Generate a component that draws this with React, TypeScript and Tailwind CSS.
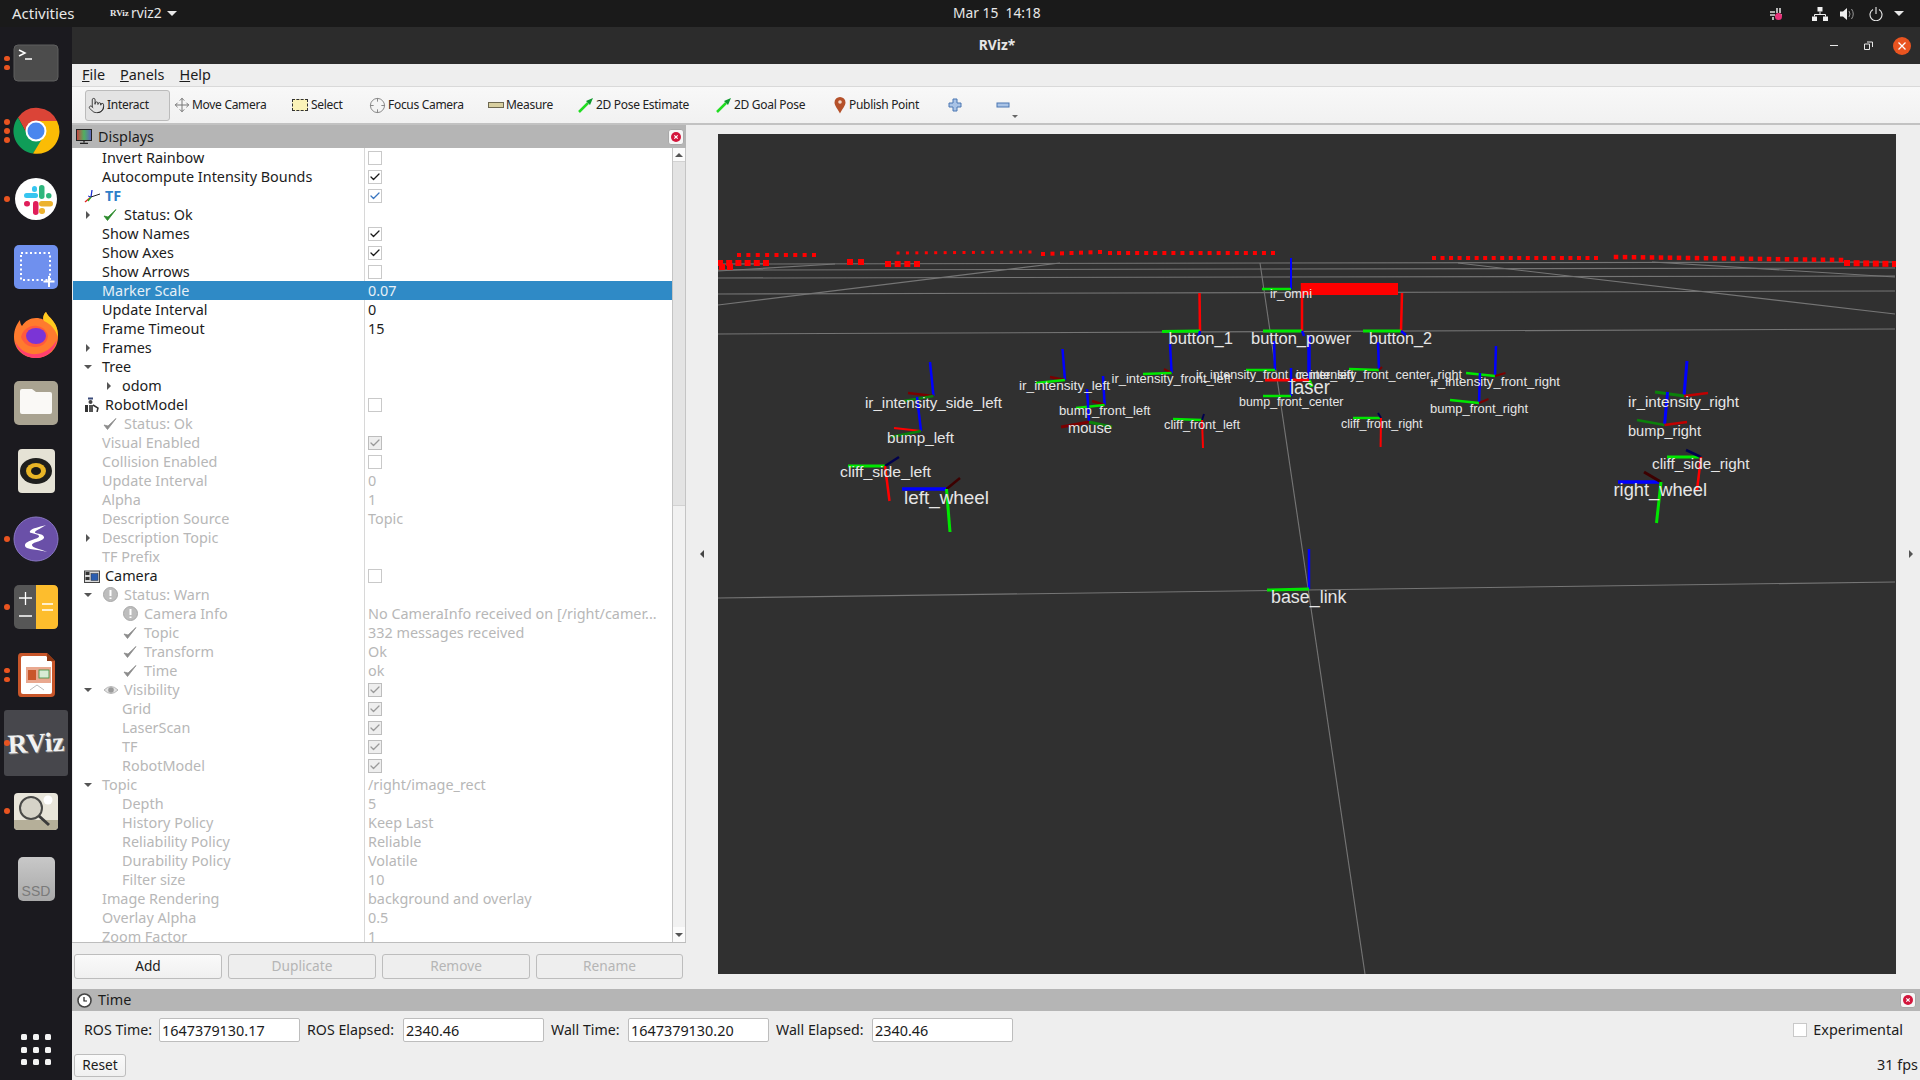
import { Check, Crosshair, Move, Pointer } from "lucide-react";
import type { ReactNode } from "react";

type IconName = "ok" | "warn" | "eye" | "tf" | "robot" | "camera";

type Row = {
  label: string;
  level?: 0 | 1;
  arrow?: "right" | "down";
  icon?: IconName;
  top?: boolean;
  value?: string;
  check?: boolean;
  dis?: boolean;
  sel?: boolean;
  blue?: boolean;
};

const ROWS: Row[] = [
  { label: "Invert Rainbow", check: false },
  { label: "Autocompute Intensity Bounds", check: true },
  { label: "TF", top: true, icon: "tf", check: true, blue: true },
  { label: "Status: Ok", arrow: "right", icon: "ok" },
  { label: "Show Names", check: true },
  { label: "Show Axes", check: true },
  { label: "Show Arrows", check: false },
  { label: "Marker Scale", value: "0.07", sel: true },
  { label: "Update Interval", value: "0" },
  { label: "Frame Timeout", value: "15" },
  { label: "Frames", arrow: "right" },
  { label: "Tree", arrow: "down" },
  { label: "odom", level: 1, arrow: "right" },
  { label: "RobotModel", top: true, icon: "robot", check: false },
  { label: "Status: Ok", icon: "ok", dis: true },
  { label: "Visual Enabled", check: true, dis: true },
  { label: "Collision Enabled", check: false, dis: true },
  { label: "Update Interval", value: "0", dis: true },
  { label: "Alpha", value: "1", dis: true },
  { label: "Description Source", value: "Topic", dis: true },
  { label: "Description Topic", arrow: "right", dis: true },
  { label: "TF Prefix", dis: true },
  { label: "Camera", top: true, icon: "camera", check: false },
  { label: "Status: Warn", arrow: "down", icon: "warn", dis: true },
  { label: "Camera Info", level: 1, icon: "warn", value: "No CameraInfo received on [/right/camer...", dis: true },
  { label: "Topic", level: 1, icon: "ok", value: "332 messages received", dis: true },
  { label: "Transform", level: 1, icon: "ok", value: "Ok", dis: true },
  { label: "Time", level: 1, icon: "ok", value: "ok", dis: true },
  { label: "Visibility", arrow: "down", icon: "eye", check: true, dis: true },
  { label: "Grid", level: 1, check: true, dis: true },
  { label: "LaserScan", level: 1, check: true, dis: true },
  { label: "TF", level: 1, check: true, dis: true },
  { label: "RobotModel", level: 1, check: true, dis: true },
  { label: "Topic", arrow: "down", value: "/right/image_rect", dis: true },
  { label: "Depth", level: 1, value: "5", dis: true },
  { label: "History Policy", level: 1, value: "Keep Last", dis: true },
  { label: "Reliability Policy", level: 1, value: "Reliable", dis: true },
  { label: "Durability Policy", level: 1, value: "Volatile", dis: true },
  { label: "Filter size", level: 1, value: "10", dis: true },
  { label: "Image Rendering", value: "background and overlay", dis: true },
  { label: "Overlay Alpha", value: "0.5", dis: true },
  { label: "Zoom Factor", value: "1", dis: true },
];

const R = "#ff0000";
const G = "#00e600";
const B = "#0000ff";
const DR = "#7a0000";
const DG = "#0b800b";
const NV = "#00004d";

// origin, then axis ends as [x, y, colour, width]
const FRAMES: { o: [number, number]; axes: [number, number, string, number][] }[] = [
  { o: [1291, 289], axes: [[1291, 258, B, 2], [1262, 289, G, 2.5]] },
  { o: [1200, 331], axes: [[1199.5, 293, R, 2.5], [1162, 331.5, G, 3], [1199, 336, B, 2.5]] },
  { o: [1302, 331], axes: [[1302, 283, R, 2.5], [1263, 331, G, 3], [1304, 336, B, 2.5]] },
  { o: [1401, 331], axes: [[1402, 293, R, 2.5], [1363, 331, G, 3], [1406, 335, B, 2.5]] },
  { o: [933.5, 396], axes: [[930, 362, B, 2.5], [908, 393, DR, 2.5], [904, 401, DG, 2.5]] },
  { o: [921, 431], axes: [[917, 397, B, 2.5], [894, 428, R, 2], [891, 437, DG, 2.5]] },
  { o: [885, 466], axes: [[848, 466, G, 3], [899, 457, NV, 2.5], [889.5, 501, R, 2.5]] },
  { o: [946.5, 489], axes: [[902, 489, B, 3.5], [960, 478, "#3d0000", 2.5], [950, 532, G, 3]] },
  { o: [1065, 380], axes: [[1062.5, 349, B, 2.5], [1050, 377, DR, 2.5], [1036, 383, G, 2.5]] },
  { o: [1104.6, 405], axes: [[1103, 376, B, 2.5], [1092, 401, DR, 2.5], [1076, 408, G, 2.5]] },
  { o: [1089, 422], axes: [[1087, 389, B, 2.5], [1061, 427, DR, 3], [1112, 427, DG, 3]] },
  { o: [1202, 420], axes: [[1173, 419, G, 2.5], [1204, 414, NV, 2], [1203, 448, R, 2]] },
  { o: [1171.6, 373], axes: [[1170, 344, B, 2.5], [1164, 369, DR, 2], [1143, 374, G, 2.5]] },
  { o: [1275, 370], axes: [[1274, 341, B, 2.5], [1246, 370, G, 2.5]] },
  { o: [1379, 370], axes: [[1378, 342, B, 2.5], [1349, 369, G, 2.5], [1382, 367, DR, 2]] },
  { o: [1495, 376], axes: [[1496, 346, B, 2.5], [1466, 373, G, 2.5], [1505.5, 373, DR, 2]] },
  { o: [1479, 403], axes: [[1480, 373, B, 2.5], [1450, 400, G, 2.5], [1488.5, 399, DR, 2]] },
  { o: [1309, 380], axes: [[1309, 335, B, 3.5], [1312, 387, G, 3.5], [1265, 380, R, 3]] },
  { o: [1291, 396], axes: [[1291, 368, B, 2.5], [1263, 396, G, 2.5]] },
  { o: [1381, 418], axes: [[1353, 418, G, 2.5], [1378, 413, NV, 2], [1380.6, 447, R, 2]] },
  { o: [1684, 396], axes: [[1687, 361, B, 3], [1655, 392, DG, 3], [1708, 393, "#c00000", 2.5]] },
  { o: [1664.5, 425], axes: [[1667.6, 392, B, 3], [1637, 420, DG, 2.5], [1687, 422, "#c00000", 2.5]] },
  { o: [1701, 457], axes: [[1667, 457, G, 3], [1686, 450, NV, 2.5], [1697, 490, R, 2.5]] },
  { o: [1661, 482], axes: [[1618, 482, B, 3.5], [1644, 472, "#3d0000", 3], [1656.5, 523, G, 3]] },
  { o: [1309, 589], axes: [[1309, 549, B, 2.5], [1267, 590, G, 3]] },
];

// name, left, right, baseline, font size
const LABELS: [string, number, number, number, number][] = [
  ["ir_omni", 1270, 1312, 298, 12],
  ["button_1", 1168.5, 1233, 344, 17],
  ["button_power", 1251, 1351, 344, 17],
  ["button_2", 1369, 1432, 344, 17],
  ["ir_intensity_side_left", 865, 1002, 408, 15],
  ["bump_left", 887, 954, 443, 15],
  ["cliff_side_left", 840, 931, 477, 15],
  ["left_wheel", 904, 989, 504, 19],
  ["ir_intensity_left", 1019, 1110, 390, 13.5],
  ["bump_front_left", 1059, 1150.5, 415, 13.5],
  ["mouse", 1068, 1112, 433, 14],
  ["cliff_front_left", 1164, 1240, 429, 12.5],
  ["ir_intensity_front_left", 1111.5, 1231, 383, 12.5],
  ["ir_intensity_front_center_left", 1196, 1354, 379, 12.5],
  ["ir_intensity_front_center_right", 1296, 1462, 379, 12.5],
  ["ir_intensity_front_right", 1430.5, 1560, 386, 13.5],
  ["bump_front_right", 1430, 1528, 413, 13.5],
  ["laser", 1290, 1330, 394, 20],
  ["bump_front_center", 1239, 1343.5, 406, 12.5],
  ["cliff_front_right", 1341, 1422.5, 428, 12.5],
  ["ir_intensity_right", 1628, 1739, 407, 15],
  ["bump_right", 1628, 1701, 436, 15],
  ["cliff_side_right", 1652, 1749.5, 469, 15],
  ["right_wheel", 1613.5, 1707, 496, 19],
  ["base_link", 1271, 1346.5, 603, 18],
];

const GRID_LINES: [number, number, number, number][] = [
  [718, 264, 1895, 262],
  [718, 270, 1895, 268],
  [718, 278, 1895, 276],
  [718, 294, 1895, 291],
  [718, 334, 1895, 329],
  [718, 305, 1060, 263],
  [718, 271, 835, 264],
  [1458, 263, 1895, 314],
  [1652, 262, 1895, 277],
  [1260, 263, 1365, 974],
  [718, 598, 1895, 582],
];

// x start, x end, y start, y end, count, size
const SCAN: [number, number, number, number, number, number][] = [
  [739, 814, 255, 255, 9, 4],
  [720, 766, 263, 263, 6, 6],
  [722, 730, 267, 267, 2, 6],
  [850, 861, 262, 262, 2, 6],
  [888, 917, 264, 264, 4, 6],
  [898, 1030, 253, 252, 15, 3],
  [1043, 1100, 254, 252, 7, 4],
  [1110, 1273, 253, 253, 19, 4],
  [1434, 1596, 258, 258, 20, 4],
  [1616, 1841, 257, 260, 26, 4.5],
  [1847, 1895, 263, 264, 6, 6],
];

function scanPoints() {
  const pts: { x: number; y: number; s: number }[] = [];
  SCAN.forEach(([x1, x2, y1, y2, n, s]) => {
    for (let i = 0; i < n; i++) {
      const t = n > 1 ? i / (n - 1) : 0;
      pts.push({ x: x1 + (x2 - x1) * t, y: y1 + (y2 - y1) * t, s });
    }
  });
  return pts;
}

function Viewport() {
  return (
    <svg viewBox="718 134 1178 840" className="block h-[840px] w-[1178px] bg-[#303030]">
      {GRID_LINES.map(([x1, y1, x2, y2], i) => (
        <line key={i} x1={x1} y1={y1} x2={x2} y2={y2} stroke="#757575" strokeWidth="1.1" />
      ))}
      {scanPoints().map((p, i) => (
        <rect key={i} x={p.x - p.s / 2} y={p.y - p.s / 2} width={p.s} height={p.s} fill="#ff0000" />
      ))}
      <rect x="1302" y="283" width="96" height="12" fill="#ff0000" />
      {FRAMES.map((f, i) => (
        <g key={i}>
          {f.axes.map(([x, y, c, w], j) => (
            <line key={j} x1={f.o[0]} y1={f.o[1]} x2={x} y2={y} stroke={c} strokeWidth={w} />
          ))}
        </g>
      ))}
      {LABELS.map(([name, x1, x2, y, size]) => (
        <text
          key={name}
          x={x1}
          y={y}
          fontSize={size}
          fill="#e6e6e6"
          fontFamily="'Liberation Sans', sans-serif"
          textLength={x2 - x1}
          lengthAdjust="spacingAndGlyphs"
        >
          {name}
        </text>
      ))}
    </svg>
  );
}

/* dock */

function DockSlot({ dots = 0, children, active }: { dots?: number; children: ReactNode; active?: boolean }) {
  return (
    <div className="relative flex h-[68px] items-center justify-center">
      {active && <div className="absolute inset-x-[4px] inset-y-[1px] rounded-[3px] bg-[#47474c]" />}
      <div className="absolute left-[4px] flex flex-col gap-[3.5px]">
        {Array.from({ length: dots }).map((_, i) => (
          <div key={i} className="h-[5.5px] w-[5.5px] rounded-full bg-[#e95420]" />
        ))}
      </div>
      <div className="relative">{children}</div>
    </div>
  );
}

function DockIcon({ children }: { children: ReactNode }) {
  return (
    <svg width="48" height="48" viewBox="0 0 48 48" className="block">
      {children}
    </svg>
  );
}

function Dock() {
  return (
    <div className="flex w-[72px] shrink-0 flex-col bg-[#1b1a1f] pt-[2px]">
      <DockSlot dots={2}>
        <DockIcon>
          <rect x="2" y="6" width="44" height="36" rx="4" fill="#4c4c4c" stroke="#5e5e5e" />
          <path d="M7 11l6 3-6 3" fill="none" stroke="#fff" strokeWidth="1.5" />
          <path d="M13 20h7" stroke="#fff" strokeWidth="1.5" />
        </DockIcon>
      </DockSlot>
      <DockSlot dots={3}>
        <DockIcon>
          <path d="M24 14H45A22.5 22.5 0 0 0 6 10.5L15 27Z" fill="#db4437" />
          <path d="M6 10.5A22.5 22.5 0 0 0 21 46.4L33 29 15 27Z" fill="#0f9d58" />
          <path d="M45 14A22.5 22.5 0 0 1 21 46.4L33 27 24 14Z" fill="#fbbc05" />
          <circle cx="24" cy="24" r="10.5" fill="#fff" />
          <circle cx="24" cy="24" r="8.5" fill="#4a86ee" />
        </DockIcon>
      </DockSlot>
      <DockSlot dots={1}>
        <DockIcon>
          <circle cx="24" cy="24" r="21" fill="#fff" />
          <rect x="12" y="18" width="14" height="5" rx="2.5" fill="#36c5f0" />
          <rect x="20" y="11" width="5" height="6" rx="2.5" fill="#36c5f0" />
          <rect x="27" y="10" width="5.5" height="14" rx="2.75" fill="#2eb67d" />
          <rect x="34" y="18" width="5.5" height="5.5" rx="2.75" fill="#2eb67d" />
          <rect x="21" y="26" width="5.5" height="14" rx="2.75" fill="#e01e5a" />
          <rect x="12" y="26" width="6" height="5.5" rx="2.75" fill="#e01e5a" />
          <rect x="27" y="26" width="14" height="5.5" rx="2.75" fill="#ecb22e" />
          <rect x="27" y="33" width="6" height="6" rx="2.75" fill="#ecb22e" />
        </DockIcon>
      </DockSlot>
      <DockSlot>
        <DockIcon>
          <rect x="2" y="2" width="44" height="44" rx="5" fill="#6f90ee" />
          <rect x="9" y="10" width="29" height="27" fill="none" stroke="#fff" strokeWidth="2" strokeDasharray="2 2.5" />
          <path d="M37 33v11M31.5 38.5h11" stroke="#fff" strokeWidth="2" />
        </DockIcon>
      </DockSlot>
      <DockSlot>
        <DockIcon>
          <path d="M24 47C11 47 2 38 2 26 2 18 5 13 8 9c0 3 1 5 2 6 3-5 8-8 14-8 3 0 5 .5 7 1.5 0-3 1-6 3-7.500 1 3 4 5 7 9 4 5 5 10 5 16C46 37 37 47 24 47Z" fill="#ff7b2e" />
          <path d="M34 1c1 3 4 5 7 9 4 5 5 10 5 16-3-8-7-13-14-16-1.500-3-.5-7 2-9Z" fill="#ffcb1f" />
          <path d="M3 30c4 9 13 14 22 13 8-1 15-6 20-14-2 10-10 18-21 18C13 47 5 40 3 30Z" fill="#ff3f6e" />
          <path d="M9 26c2-8 9-12 16-11 6 1 10 5 11 10-1 7-6 11-13 11-7 0-12-4-14-10Z" fill="#ff5a3c" />
          <ellipse cx="24" cy="25" rx="10" ry="8" fill="#7b34d6" />
        </DockIcon>
      </DockSlot>
      <DockSlot>
        <DockIcon>
          <rect x="2" y="2" width="44" height="44" rx="5" fill="#a9a391" />
          <path d="M8 12q0-2 2-2h10l4 3h14q2 0 2 2v18q0 2-2 2H10q-2 0-2-2Z" fill="#faf9f6" />
        </DockIcon>
      </DockSlot>
      <DockSlot>
        <DockIcon>
          <rect x="6" y="2" width="37" height="44" rx="4" fill="#e5e2d5" />
          <ellipse cx="24" cy="24" rx="16" ry="13" fill="#1f1f1d" />
          <ellipse cx="24" cy="24" rx="10" ry="8" fill="#e9b526" />
          <ellipse cx="24" cy="24" rx="5" ry="4" fill="#1a1a18" />
        </DockIcon>
      </DockSlot>
      <DockSlot dots={1}>
        <DockIcon>
          <circle cx="24" cy="24" r="22" fill="#6a50a8" stroke="#8a78c4" />
          <path d="M34 10c-6 2-14 3-16 6s8 2 9 5-13 4-14 9 12 4 22 7c-6-3-15-4-15-7s13-4 12-8-10-3-9-5 7-4 11-7Z" fill="#fff" />
        </DockIcon>
      </DockSlot>
      <DockSlot dots={1}>
        <DockIcon>
          <rect x="2" y="2" width="44" height="44" rx="5" fill="#565656" />
          <path d="M24 2h17q5 0 5 5v34q0 5-5 5H24Z" fill="#fdbd2d" />
          <path d="M7 15h13M13.5 9v13M7 33h13M30 21h11M30 27h11" stroke="#fff" strokeWidth="1.3" />
        </DockIcon>
      </DockSlot>
      <DockSlot dots={2}>
        <DockIcon>
          <path d="M9 2h26l8 8v32q0 4-4 4H9q-3 0-3-4V6q0-4 3-4Z" fill="#c8562a" />
          <path d="M11 5h23l6 6v30q0 2-2 2H11q-2 0-2-2V7q0-2 2-2Z" fill="#fff" />
          <path d="M35 2l8 8h-8Z" fill="#8e3712" />
          <rect x="14" y="16" width="25" height="16" fill="#e9a88f" />
          <rect x="16" y="19" width="8" height="10" fill="#c8562a" />
          <rect x="27" y="19" width="10" height="8" fill="#d8ecd5" stroke="#3a8f3c" strokeWidth="0.8" />
          <path d="M18 39l7-5 7 5" fill="none" stroke="#bbb" />
        </DockIcon>
      </DockSlot>
      <DockSlot dots={1} active>
        <div className="flex h-[48px] w-[48px] -rotate-3 items-center justify-center font-['Liberation_Serif',serif] font-bold text-[#f2f2f2] [text-shadow:1px_1px_0_#8a8a8a]">
          <span className="text-[27px] leading-none">RViz</span>
        </div>
      </DockSlot>
      <DockSlot dots={1}>
        <DockIcon>
          <rect x="2" y="6" width="44" height="37" rx="4" fill="#e8e5da" />
          <path d="M2 33h44v6q0 4-4 4H6q-4 0-4-4Z" fill="#b5af99" />
          <circle cx="19" cy="21" r="11" fill="#d6d3c8" stroke="#4a4a48" strokeWidth="2" />
          <circle cx="36" cy="13" r="4.5" fill="#fff" />
          <path d="M27 29l10 9" stroke="#3b3b3b" strokeWidth="3" />
        </DockIcon>
      </DockSlot>
      <DockSlot>
        <div className="flex h-[44px] w-[37px] items-end justify-center rounded-[5px] bg-[linear-gradient(#c8c8c8,#a9a9a9)] pb-[3px] font-['Liberation_Sans',sans-serif] text-[14px] leading-none text-[#7a7a7a]">
          SSD
        </div>
      </DockSlot>
      <div className="mb-[15px] mt-auto grid w-[30px] grid-cols-3 gap-x-[6px] gap-y-[6.5px] self-center">
        {Array.from({ length: 9 }).map((_, i) => (
          <div key={i} className="h-[6px] w-[6px] rounded-[1.5px] bg-[#f4f4f4]" />
        ))}
      </div>
    </div>
  );
}

/* small icons */

function CloseBtn() {
  return (
    <div className="flex h-[16px] w-[16px] items-center justify-center rounded-[3px] border border-[#a9a9a9] bg-[#f6f6f6]">
      <svg width="12" height="12" viewBox="0 0 12 12">
        <circle cx="6" cy="6" r="5" fill="#d3163c" />
        <path d="M4.3 4.3l3.4 3.4M7.7 4.3l-3.4 3.4" stroke="#fff" strokeWidth="1.2" />
      </svg>
    </div>
  );
}

function Arrow({ dir }: { dir: "right" | "down" | "left" | "up" }) {
  if (dir === "right") return <div className="h-0 w-0 border-y-[4px] border-l-[4px] border-y-transparent border-l-[#555]" />;
  if (dir === "left") return <div className="h-0 w-0 border-y-[4px] border-r-[4px] border-y-transparent border-r-[#444]" />;
  if (dir === "up") return <div className="h-0 w-0 border-x-[4px] border-b-[4px] border-x-transparent border-b-[#555]" />;
  return <div className="h-0 w-0 border-x-[4px] border-t-[4px] border-x-transparent border-t-[#555]" />;
}

function RowIcon({ name, dis }: { name: IconName; dis?: boolean }) {
  if (name === "ok")
    return (
      <svg width="14" height="14" viewBox="0 0 14 14">
        <path d="M1 8l3.5 4.5L13 1.5 5 9Z" fill={dis ? "#8c8c8c" : "#2b8a2b"} stroke={dis ? "#8c8c8c" : "#2b8a2b"} strokeWidth="0.8" />
      </svg>
    );
  if (name === "warn")
    return (
      <svg width="15" height="15" viewBox="0 0 15 15">
        <circle cx="7.5" cy="7.5" r="7" fill="#bdbdbd" stroke="#a8a8a8" />
        <path d="M7.5 3v6M7.5 10.5v1.5" stroke="#fff" strokeWidth="2" />
      </svg>
    );
  if (name === "eye")
    return (
      <svg width="16" height="12" viewBox="0 0 16 12">
        <path d="M1 6q7-7 14 0-7 7-14 0Z" fill="#e2e2e2" stroke="#b5b5b5" />
        <circle cx="8" cy="6" r="2.8" fill="#9a9a9a" />
      </svg>
    );
  if (name === "tf")
    return (
      <svg width="17" height="15" viewBox="0 0 17 15">
        <path d="M7 9L8 2" stroke="#2030d0" strokeWidth="1.3" />
        <path d="M7 9L16 6" stroke="#222" strokeWidth="1" />
        <path d="M7 9L1 14" stroke="#e02020" strokeWidth="1.3" />
        <path d="M7 9L4 13" stroke="#20b020" strokeWidth="1.3" />
        <path d="M7 9L4 8" stroke="#2030d0" strokeWidth="1" />
      </svg>
    );
  if (name === "robot")
    return (
      <svg width="16" height="15" viewBox="0 0 16 15">
        <rect x="4" y="0.5" width="5" height="2" fill="#3a4a7a" />
        <circle cx="6.5" cy="5" r="2" fill="#444" />
        <rect x="1" y="8" width="3" height="7" fill="#333" />
        <rect x="5" y="8" width="4" height="7" fill="#555" />
        <path d="M9 8l5 3-1 4" fill="none" stroke="#333" strokeWidth="1.5" />
      </svg>
    );
  return (
    <svg width="16" height="14" viewBox="0 0 16 14">
      <rect x="0.5" y="2" width="15" height="11.5" fill="#d8d8d8" stroke="#444" />
      <rect x="1.5" y="3" width="4" height="3" fill="#333" />
      <rect x="1.5" y="8" width="4" height="3" fill="#333" />
      <rect x="7" y="4.5" width="7" height="7" fill="#2a5db0" stroke="#333" strokeWidth="0.5" />
    </svg>
  );
}

function Checkbox({ on, blue, dis }: { on?: boolean; blue?: boolean; dis?: boolean }) {
  return (
    <div className={`flex h-[14px] w-[14px] items-center justify-center border ${dis && on ? "border-[#bdbdbd] bg-[#eeeeee]" : "border-[#c9c9c9] bg-white"}`}>
      {on && <Check size={12} strokeWidth={2.6} className={dis ? "text-[#9a9a9a]" : blue ? "text-[#3a76c0]" : "text-[#1a1a1a]"} />}
    </div>
  );
}

function TreeRow({ row }: { row: Row }) {
  const tone = row.sel ? "bg-[#2f8ac6] text-[#e6f0f7]" : row.dis ? "text-[#b7b7b7]" : "text-[#1c1c1c]";
  return (
    <div className={`flex h-[19px] shrink-0 ${tone}`}>
      <div className={`flex w-[292px] shrink-0 items-center border-r ${row.sel ? "border-[#2f8ac6]" : "border-[#d8d8d8]"}`}>
        {row.top ? (
          <div className="flex w-[32px] shrink-0 justify-center pl-[6px]">{row.icon && <RowIcon name={row.icon} />}</div>
        ) : (
          <>
            <div className="flex w-[29px] shrink-0 justify-center">{row.level !== 1 && row.arrow && <Arrow dir={row.arrow} />}</div>
            {row.level === 1 && (
              <div className="flex w-[20px] shrink-0 justify-center pr-[6px]">{row.arrow && <Arrow dir={row.arrow} />}</div>
            )}
            {row.icon && <div className="flex w-[22px] shrink-0 pl-[1px]"><RowIcon name={row.icon} dis={row.dis} /></div>}
          </>
        )}
        <span className={`whitespace-nowrap ${row.blue ? "font-bold text-[#2f7fc9]" : ""}`}>{row.label}</span>
      </div>
      <div className="flex min-w-0 flex-1 items-center pl-[3px]">
        {row.check !== undefined ? (
          <Checkbox on={row.check} blue={row.blue} dis={row.dis} />
        ) : (
          <span className="whitespace-nowrap">{row.value}</span>
        )}
      </div>
    </div>
  );
}

function ToolItem({ icon, label, className, active }: { icon: ReactNode; label: string; className: string; active?: boolean }) {
  return (
    <div className={`flex h-[31px] shrink-0 items-center gap-[2px] ${active ? "rounded-[3px] border border-[#bbbbbb] bg-[#e3e3e3] pl-[2px]" : ""} ${className}`}>
      {icon}
      <span className="whitespace-nowrap">{label}</span>
    </div>
  );
}

function PoseArrow() {
  return (
    <svg width="16" height="16" viewBox="0 0 16 16">
      <path d="M1 15L10 6" stroke="#22dd22" strokeWidth="2.5" />
      <path d="M15 1l-7 3 4 4Z" fill="#0e9a2c" />
    </svg>
  );
}

function Toolbar() {
  return (
    <div className="flex h-[38px] shrink-0 items-center border-b-2 border-[#c2c2c2] bg-[linear-gradient(#f8f8f8,#f1f1f1)] pl-[13px] text-[12px] tracking-[-0.3px] text-[#222222]">
      <ToolItem active className="w-[85px]" label="Interact" icon={<Pointer size={17} strokeWidth={1.2} className="text-[#222]" />} />
      <ToolItem className="ml-[4px] w-[118px]" label="Move Camera" icon={<Move size={16} strokeWidth={1.5} className="text-[#777]" />} />
      <ToolItem
        className="w-[77px] gap-[3px]"
        label="Select"
        icon={<div className="h-[12px] w-[16px] border border-dashed border-[#333] bg-[#fbf3b8]" />}
      />
      <ToolItem className="w-[119px]" label="Focus Camera" icon={<Crosshair size={17} strokeWidth={1.4} className="text-[#888]" />} />
      <ToolItem
        className="w-[90px]"
        label="Measure"
        icon={<div className="h-[6px] w-[16px] border border-[#6d6850] bg-[#d8cfa0]" />}
      />
      <ToolItem className="w-[138px]" label="2D Pose Estimate" icon={<PoseArrow />} />
      <ToolItem className="w-[118px]" label="2D Goal Pose" icon={<PoseArrow />} />
      <ToolItem
        className="w-[114px]"
        label="Publish Point"
        icon={
          <svg width="12" height="17" viewBox="0 0 12 17" className="mr-[1px]">
            <path d="M6 16.5C4 12 .5 9 .5 5.5a5.5 5.5 0 0 1 11 0C11.5 9 8 12 6 16.5Z" fill="#b5512a" />
            <circle cx="6" cy="5" r="1.8" fill="#f3d8c8" />
          </svg>
        }
      />
      <svg width="14" height="14" viewBox="0 0 14 14" className="shrink-0">
        <path d="M5 1h4v4h4v4H9v4H5V9H1V5h4Z" fill="#a9c3e6" stroke="#4a76b2" />
      </svg>
      <svg width="14" height="14" viewBox="0 0 14 14" className="ml-[34px] shrink-0">
        <rect x="1" y="5" width="12" height="4" fill="#a9c3e6" stroke="#4a76b2" />
      </svg>
      <div className="ml-[2px] mt-[22px]"><div className="h-0 w-0 border-x-[3px] border-t-[3px] border-x-transparent border-t-[#666]" /></div>
    </div>
  );
}

function QtButton({ label, off, className }: { label: string; off?: boolean; className: string }) {
  return (
    <div className={`flex items-center justify-center rounded-[3px] border border-[#bdbdbd] text-[13.7px] ${off ? "bg-[#eeeeee] text-[#b5b5b5]" : "bg-[linear-gradient(#fafafa,#f0f0f0)] text-[#1c1c1c]"} ${className}`}>
      {label}
    </div>
  );
}

function TimeField({ label, value, labelW }: { label: string; value: string; labelW: string }) {
  return (
    <>
      <span className={`whitespace-nowrap text-[14.2px] ${labelW}`}>{label}</span>
      <div className="mx-[7px] flex h-[24px] w-[141px] shrink-0 items-center rounded-[2px] border border-[#bdbdbd] bg-white pl-[2px] pt-[1px]">{value}</div>
    </>
  );
}

export default function App() {
  return (
    <div className="flex h-[1080px] w-[1920px] flex-col overflow-hidden bg-[#eeeeee] font-['Noto_Sans',sans-serif] text-[14.4px]">
      {/* top bar */}
      <div className="relative flex h-[27px] shrink-0 items-center bg-[#1a1a1a] pl-[12px] text-[13.8px] text-[#e8e8e8]">
        <span className="w-[98px] text-[15px]">Activities</span>
        <span className="w-[21px] font-['Liberation_Serif',serif] text-[9px] font-bold">RViz</span>
        <span>rviz2</span>
        <div className="ml-[5px] h-0 w-0 border-x-[5px] border-t-[5px] border-x-transparent border-t-[#e8e8e8]" />
        <span className="absolute left-[953px]">Mar 15&nbsp;&nbsp;14:18</span>
        <div className="ml-auto flex items-center pr-[16px]">
          <svg width="14" height="14" viewBox="0 0 14 14">
            <path d="M1 5h5M1 8h5M8 1v5M11 1v5M8 8h5M8 11h3M4 10v3" stroke="#ddd" strokeWidth="1.6" />
            <circle cx="9.5" cy="9.5" r="3.5" fill="#e8327a" />
          </svg>
          <svg width="16" height="14" viewBox="0 0 16 14" className="ml-[29px]">
            <path d="M5.5 0h5v4.5h-5ZM0 9.5h5V14H0ZM11 9.5h5V14h-5Z" fill="#f0f0f0" />
            <path d="M8 4.5v3M2.5 9.5v-2h11v2" fill="none" stroke="#f0f0f0" />
          </svg>
          <svg width="15" height="14" viewBox="0 0 15 14" className="ml-[12px]">
            <path d="M0 4.5h3L7 1v12L3 9.5H0Z" fill="#eeeeee" />
            <path d="M9 4q2 3 0 6M11.5 2q3.5 5 0 10" fill="none" stroke="#999" />
          </svg>
          <svg width="14" height="14" viewBox="0 0 14 14" className="ml-[14px]">
            <path d="M4 2.5a6 6 0 1 0 6 0M7 0v7" fill="none" stroke="#e8e8e8" strokeWidth="1.1" />
          </svg>
          <div className="ml-[11px] h-0 w-0 border-x-[5px] border-t-[5px] border-x-transparent border-t-[#e8e8e8]" />
        </div>
      </div>

      <div className="flex min-h-0 flex-1">
        <Dock />
        <div className="flex min-w-0 flex-1 flex-col">
          {/* title bar */}
          <div className="relative flex h-[37px] shrink-0 items-center justify-center bg-[#2c2c2c] text-[13.8px] font-bold text-[#e6e6e6]">
            <span className="pl-[2px]">RViz*</span>
            <div className="absolute right-[9px] flex items-center">
              <div className="h-px w-[8px] bg-[#e8e8e8]" />
              <svg width="9" height="9" viewBox="0 0 9 9" className="ml-[26px]">
                <path d="M.5 3h5v5.5h-5ZM3 1h5.5v5" fill="none" stroke="#e8e8e8" />
              </svg>
              <div className="ml-[20px] flex h-[18px] w-[18px] items-center justify-center rounded-full bg-[#e95420]">
                <svg width="8" height="8" viewBox="0 0 8 8">
                  <path d="M.5.5l7 7M7.5.5l-7 7" stroke="#fff" strokeWidth="1.3" />
                </svg>
              </div>
            </div>
          </div>

          {/* menu */}
          <div className="flex h-[23px] shrink-0 items-center gap-[15px] border-b border-[#d9d9d9] bg-[#eeeeee] pl-[10px] text-[#1c1c1c]">
            <span><span className="underline">F</span>ile</span>
            <span><span className="underline">P</span>anels</span>
            <span><span className="underline">H</span>elp</span>
          </div>

          <Toolbar />

          <div className="flex h-[864px] shrink-0">
            {/* displays */}
            <div className="flex w-[614px] shrink-0 flex-col">
              <div className="flex h-[23px] shrink-0 items-center bg-[#b5b5b5] pl-[4px] pr-[2px] text-[#1c1c1c]">
                <svg width="16" height="15" viewBox="0 0 16 15" className="mr-[6px]">
                  <defs>
                    <linearGradient id="mon" x1="0" x2="1" y1="0" y2="0">
                      <stop offset="0" stopColor="#d04040" />
                      <stop offset="0.5" stopColor="#50b060" />
                      <stop offset="1" stopColor="#6060c0" />
                    </linearGradient>
                  </defs>
                  <rect x="0.5" y="0.5" width="15" height="11" fill="url(#mon)" stroke="#222" />
                  <path d="M8 11.5v2M4 14.5h8" stroke="#222" strokeWidth="1.3" />
                </svg>
                <span>Displays</span>
                <div className="ml-auto"><CloseBtn /></div>
              </div>
              <div className="flex h-[795px] shrink-0 border-b border-[#bdbdbd]">
                <div className="ml-px flex min-w-0 flex-1 flex-col overflow-hidden bg-white">
                  {ROWS.map((row, i) => (
                    <TreeRow key={i} row={row} />
                  ))}
                </div>
                <div className="flex w-[14px] shrink-0 flex-col border-x border-[#c4c4c4] bg-[#f1f1f1]">
                  <div className="flex h-[13px] shrink-0 items-center justify-center bg-[#fbfbfb]"><Arrow dir="up" /></div>
                  <div className="h-[345px] shrink-0 border-y border-[#d2d2d2] bg-[#e3e3e3]" />
                  <div className="mt-auto flex h-[15px] shrink-0 items-center justify-center bg-[#fbfbfb]"><Arrow dir="down" /></div>
                </div>
              </div>
              <div className="flex gap-[6px] pl-[2px] pt-[11px] text-[#1c1c1c]">
                <QtButton label="Add" className="h-[25px] w-[148px]" />
                <QtButton off label="Duplicate" className="h-[25px] w-[148px]" />
                <QtButton off label="Remove" className="h-[25px] w-[148px]" />
                <QtButton off label="Rename" className="h-[25px] w-[147px]" />
              </div>
            </div>

            {/* viewport */}
            <div className="mt-[9px] flex h-[840px] flex-1">
              <div className="flex w-[32px] shrink-0 items-center justify-center"><Arrow dir="left" /></div>
              <Viewport />
              <div className="flex flex-1 items-center justify-center pl-[6px]"><Arrow dir="right" /></div>
            </div>
          </div>

          {/* time panel */}
          <div className="flex h-[22px] shrink-0 items-center bg-[#b5b5b5] pl-[5px] pr-[4px] text-[#1c1c1c]">
            <svg width="15" height="15" viewBox="0 0 15 15" className="mr-[6px]">
              <circle cx="7.5" cy="7.5" r="6.5" fill="#fff" stroke="#444" strokeWidth="1.6" />
              <path d="M7 4v4h3" fill="none" stroke="#222" strokeWidth="1.2" />
            </svg>
            <span>Time</span>
            <div className="ml-auto"><CloseBtn /></div>
          </div>
          <div className="mt-[7px] flex h-[24px] shrink-0 items-center pl-[12px] pr-[17px] text-[#1c1c1c]">
            <TimeField label="ROS Time:" value="1647379130.17" labelW="w-[68px]" />
            <TimeField label="ROS Elapsed:" value="2340.46" labelW="w-[89px]" />
            <TimeField label="Wall Time:" value="1647379130.20" labelW="w-[70px]" />
            <TimeField label="Wall Elapsed:" value="2340.46" labelW="w-[89px]" />
            <div className="ml-auto flex items-center gap-[6px]">
              <Checkbox />
              <span>Experimental</span>
            </div>
          </div>
          <div className="flex items-start px-[2px] pt-[12px] text-[#1c1c1c]">
            <QtButton label="Reset" className="h-[23px] w-[52px]" />
            <span className="ml-auto">31 fps</span>
          </div>
        </div>
      </div>
    </div>
  );
}
